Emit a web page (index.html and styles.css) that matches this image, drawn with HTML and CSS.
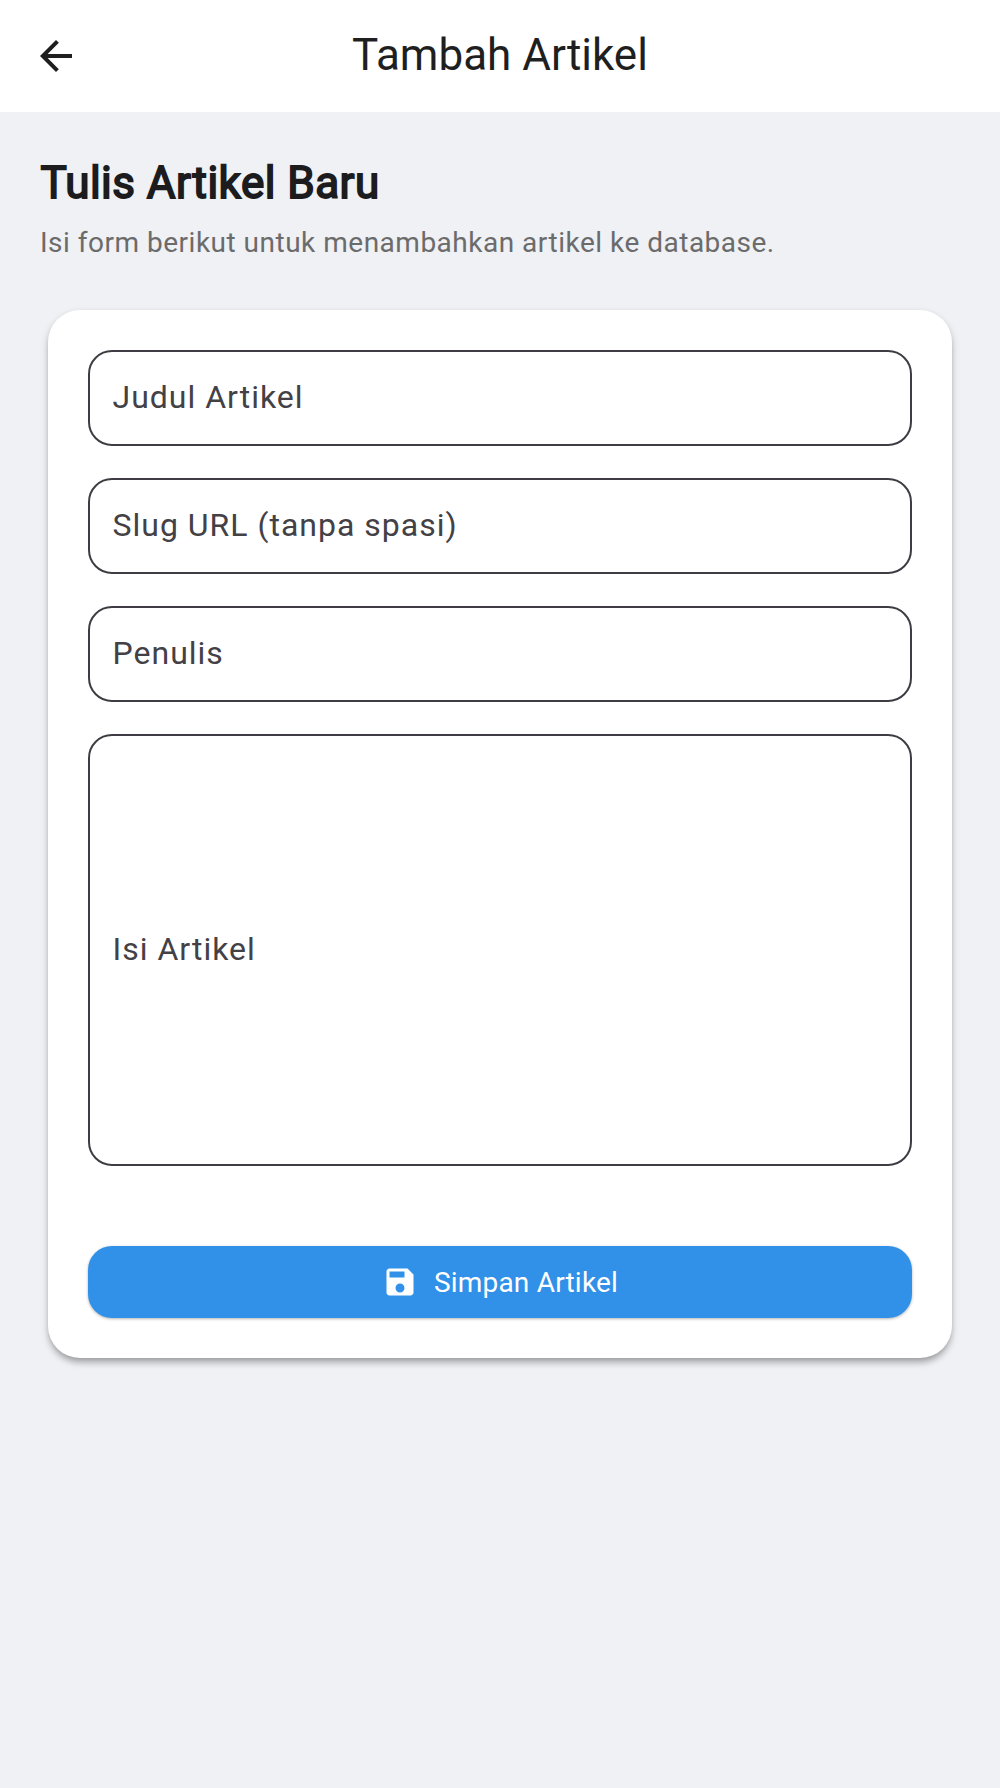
FILE: index.html
```html
<!DOCTYPE html>
<html lang="id">
<head>
<meta charset="utf-8">
<title>Tambah Artikel</title>
<link rel="stylesheet" href="styles.css">
</head>
<body>
<header class="app-bar">
  <button class="back" type="button" aria-label="Kembali">
    <svg viewBox="0 0 24 24" width="48" height="48"><path d="M20 11H7.83l5.59-5.59L12 4l-8 8 8 8 1.41-1.41L7.83 13H20v-2z"/></svg>
  </button>
  <h1 class="app-title">Tambah Artikel</h1>
</header>
<main class="content">
  <h2 class="heading">Tulis Artikel Baru</h2>
  <p class="subtitle">Isi form berikut untuk menambahkan artikel ke database.</p>
  <form class="card">
    <div class="field"><span class="label">Judul Artikel</span></div>
    <div class="field"><span class="label">Slug URL (tanpa spasi)</span></div>
    <div class="field"><span class="label">Penulis</span></div>
    <div class="field field-large"><span class="label">Isi Artikel</span></div>
    <button class="save" type="button">
      <svg viewBox="0 0 24 24" width="36" height="36"><path d="M17 3H5c-1.11 0-2 .9-2 2v14c0 1.1.89 2 2 2h14c1.1 0 2-.9 2-2V7l-4-4zm-5 16c-1.66 0-3-1.34-3-3s1.34-3 3-3 3 1.34 3 3-1.34 3-3 3zm3-10H5V5h10v4z"/></svg>
      <span>Simpan Artikel</span>
    </button>
  </form>
</main>
</body>
</html>
```
FILE: styles.css
```css
* {
  box-sizing: border-box;
}

body {
  margin: 0;
  min-height: 1788px;
  background: #eff1f5;
  color: #1c1b1f;
  font-family: Roboto, sans-serif;
}

button {
  border: 0;
  font-family: inherit;
}

.app-bar {
  display: grid;
  grid-template-columns: 112px 1fr 112px;
  align-items: center;
  height: 112px;
  background: #fff;
}

.back {
  display: flex;
  justify-content: center;
  padding: 0;
  background: none;
  fill: #1f1f1f;
}

.app-title {
  margin: 0;
  padding-bottom: 2px;
  color: #1f1f1f;
  font-size: 44px;
  font-weight: 400;
  line-height: 56px;
  text-align: center;
}

.content {
  padding: 40px;
}

.heading {
  margin: 0;
  padding: 1px 0 1px 0.5px;
  font-size: 44px;
  font-weight: 400;
  line-height: 60px;
  letter-spacing: 0.48px;
  color: #1c1c1e;
  -webkit-text-stroke: 1.8px #1c1c1e;
}

.subtitle {
  margin: 9px 0 0;
  color: #6b6b6b;
  font-size: 28px;
  line-height: 40px;
  letter-spacing: 0.5px;
}

.card {
  display: flex;
  flex-direction: column;
  gap: 32px;
  margin: 47px 8px 0;
  padding: 40px;
  border-radius: 32px;
  background: #fff;
  box-shadow: 0 6px 6px -2px rgba(0, 0, 0, 0.2), 0 4px 8px rgba(0, 0, 0, 0.16), 0 1px 4px rgba(0, 0, 0, 0.06);
}

.field {
  display: flex;
  align-items: center;
  height: 96px;
  padding: 0 22px 2px 22.5px;
  border: 2px solid #3f3d43;
  border-radius: 24px;
}

.field-large {
  height: 432px;
}

.label {
  color: #434146;
  font-size: 32px;
  line-height: 48px;
  letter-spacing: 1px;
}

.save {
  display: flex;
  align-items: center;
  justify-content: center;
  gap: 16px;
  height: 72px;
  margin-top: 48px;
  padding: 0;
  border-radius: 24px;
  background: #3190e8;
  color: #fff;
  fill: #fff;
  font-size: 28px;
  letter-spacing: 0.2px;
  box-shadow: 0 1px 3px rgba(0, 0, 0, 0.3);
}
```
